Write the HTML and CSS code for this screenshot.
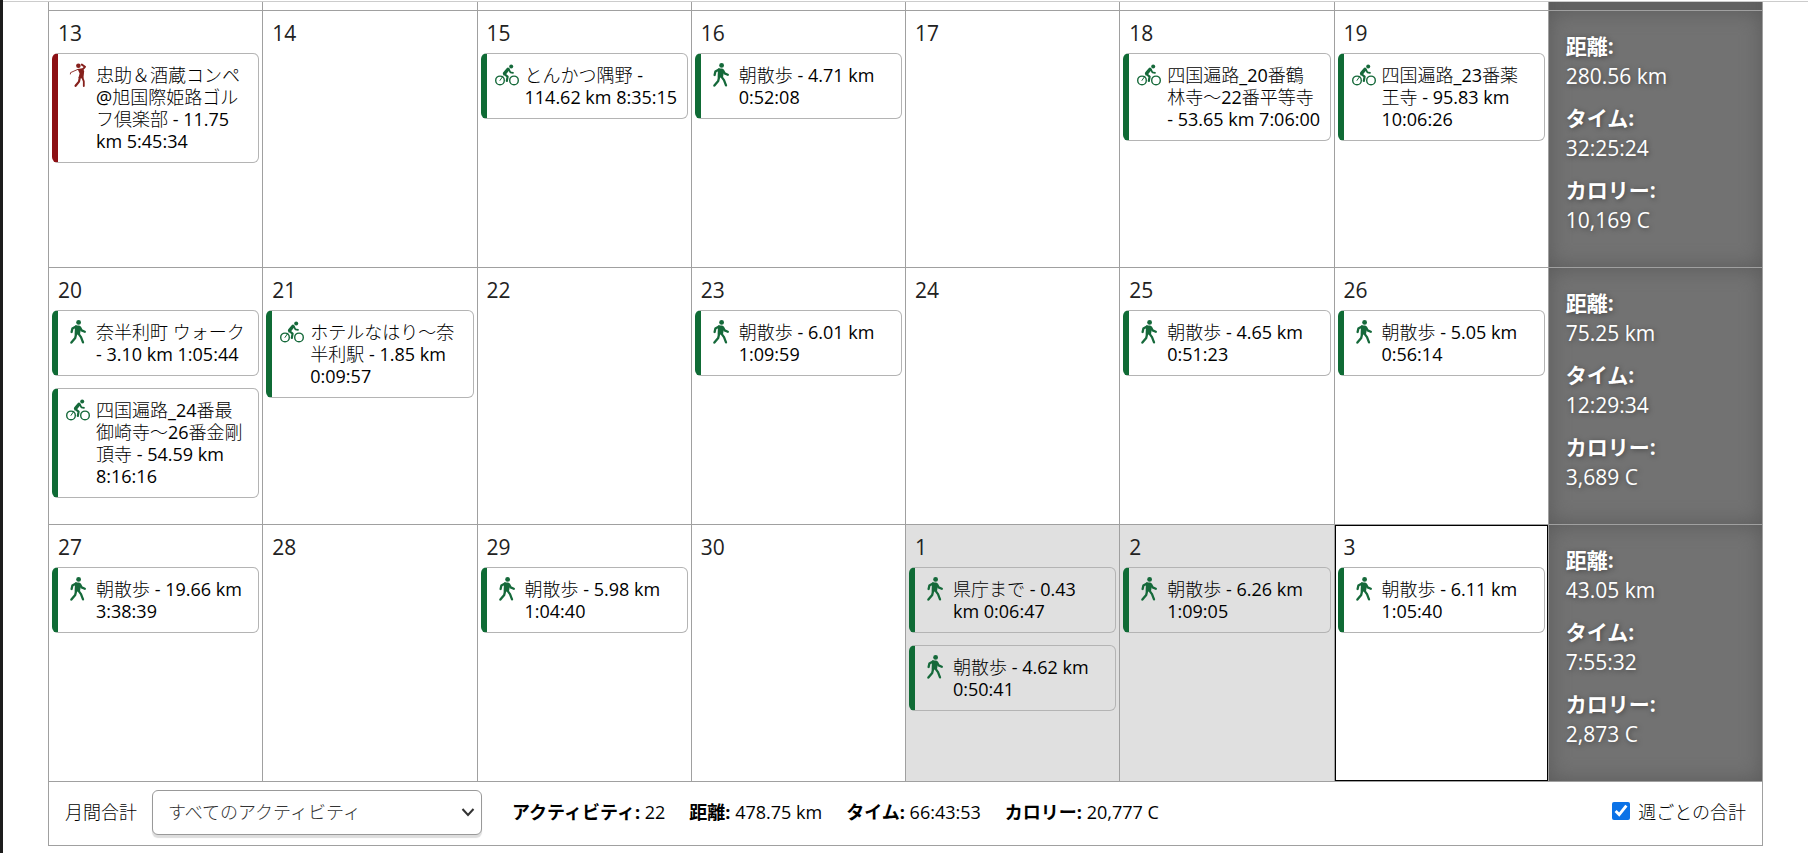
FILE: index.html
```html
<!DOCTYPE html>
<html lang="ja">
<head>
    <meta charset="UTF-8">
    <meta name="viewport" content="width=device-width, initial-scale=1.0">
    <title>カレンダー</title>
    <link rel="stylesheet" href="styles.css">
</head>
<body>
    <svg class="sprite" aria-hidden="true">
        <symbol id="walk" viewBox="0 0 24 24">
            <circle cx="12.6" cy="2.4" r="2.4" fill="currentColor"/>
            <path d="M9 5.4 L13.4 5.4 L15 7.4 L14 14.4 L8.6 14.4 Z" fill="currentColor"/>
            <g fill="none" stroke="currentColor" stroke-width="2.3" stroke-linecap="round" stroke-linejoin="round">
                <path d="M10 6.4 L6.4 8.6 L5.6 12"/>
                <path d="M14 7.4 L15.6 10.4 L18.8 11.8"/>
                <path d="M10.2 13.4 L9.2 18 L5.4 22.6"/>
                <path d="M12.4 13.6 L15 17.2 L17 22.4"/>
            </g>
        </symbol>
        <symbol id="bike" viewBox="0 0 24 24">
            <circle cx="16.2" cy="3.4" r="2" fill="currentColor"/>
            <g fill="none" stroke="currentColor" stroke-linecap="round" stroke-linejoin="round">
                <circle cx="5" cy="17.4" r="4.3" stroke-width="1.4"/>
                <circle cx="19" cy="17.4" r="4.3" stroke-width="1.4"/>
                <path d="M13 6.2 L9.6 10.4" stroke-width="3.4"/>
                <path d="M14 6.6 L15.4 9.4 L18 9.8" stroke-width="1.7"/>
                <path d="M9.4 11.2 L12.6 13.6 L11.8 18" stroke-width="2.2"/>
                <path d="M5 17.4 L8 13" stroke-width="1"/>
            </g>
        </symbol>
        <symbol id="golf" viewBox="0 0 24 24">
            <circle cx="12.4" cy="2.8" r="2.3" fill="currentColor"/>
            <path d="M11.6 6 L16.4 5.2 L18.2 8 L17.4 15.6 L12.4 15 L13.6 10.4 Z" fill="currentColor"/>
            <g fill="none" stroke="currentColor" stroke-linecap="round" stroke-linejoin="round">
                <path d="M16.2 6.8 L19 3.8 L15.8 1.6" stroke-width="1.9"/>
                <path d="M11.8 6.4 L4.6 9.6 L4.4 11" stroke-width="0.9"/>
                <path d="M13.8 14.6 L13 18.6 L9.6 22.8" stroke-width="2.2"/>
                <path d="M16.4 14.6 L17.8 18.4 L17.8 23" stroke-width="1.8"/>
            </g>
        </symbol>
    </svg>

    <main class="page">
        <table class="calendar">
            <tbody>
                <tr class="previous-week">
                    <td></td><td></td><td></td><td></td><td></td><td></td><td></td>
                    <td class="summary"></td>
                </tr>
                <tr class="week">
                    <td>
                        <div class="date">13</div>
                        <a class="activity golf" href="#"><svg class="icon"><use href="#golf"/></svg>忠助＆酒蔵コンペ@旭国際姫路ゴルフ倶楽部 - 11.75 km 5:45:34</a>
                    </td>
                    <td><div class="date">14</div></td>
                    <td>
                        <div class="date">15</div>
                        <a class="activity" href="#"><svg class="icon"><use href="#bike"/></svg>とんかつ隅野 - 114.62 km 8:35:15</a>
                    </td>
                    <td>
                        <div class="date">16</div>
                        <a class="activity" href="#"><svg class="icon"><use href="#walk"/></svg>朝散歩 - 4.71 km 0:52:08</a>
                    </td>
                    <td><div class="date">17</div></td>
                    <td>
                        <div class="date">18</div>
                        <a class="activity" href="#"><svg class="icon"><use href="#bike"/></svg>四国遍路_20番鶴林寺～22番平等寺 - 53.65 km 7:06:00</a>
                    </td>
                    <td>
                        <div class="date">19</div>
                        <a class="activity" href="#"><svg class="icon"><use href="#bike"/></svg>四国遍路_23番薬王寺 - 95.83 km 10:06:26</a>
                    </td>
                    <td class="summary">
                        <dl>
                            <dt>距離:</dt>
                            <dd>280.56 km</dd>
                            <dt>タイム:</dt>
                            <dd>32:25:24</dd>
                            <dt>カロリー:</dt>
                            <dd>10,169 C</dd>
                        </dl>
                    </td>
                </tr>
                <tr class="week">
                    <td>
                        <div class="date">20</div>
                        <a class="activity" href="#"><svg class="icon"><use href="#walk"/></svg>奈半利町 ウォーク - 3.10 km 1:05:44</a>
                        <a class="activity" href="#"><svg class="icon"><use href="#bike"/></svg>四国遍路_24番最御崎寺～26番金剛頂寺 - 54.59 km 8:16:16</a>
                    </td>
                    <td>
                        <div class="date">21</div>
                        <a class="activity" href="#"><svg class="icon"><use href="#bike"/></svg>ホテルなはり～奈半利駅 - 1.85 km 0:09:57</a>
                    </td>
                    <td><div class="date">22</div></td>
                    <td>
                        <div class="date">23</div>
                        <a class="activity" href="#"><svg class="icon"><use href="#walk"/></svg>朝散歩 - 6.01 km 1:09:59</a>
                    </td>
                    <td><div class="date">24</div></td>
                    <td>
                        <div class="date">25</div>
                        <a class="activity" href="#"><svg class="icon"><use href="#walk"/></svg>朝散歩 - 4.65 km 0:51:23</a>
                    </td>
                    <td>
                        <div class="date">26</div>
                        <a class="activity" href="#"><svg class="icon"><use href="#walk"/></svg>朝散歩 - 5.05 km 0:56:14</a>
                    </td>
                    <td class="summary">
                        <dl>
                            <dt>距離:</dt>
                            <dd>75.25 km</dd>
                            <dt>タイム:</dt>
                            <dd>12:29:34</dd>
                            <dt>カロリー:</dt>
                            <dd>3,689 C</dd>
                        </dl>
                    </td>
                </tr>
                <tr class="week">
                    <td>
                        <div class="date">27</div>
                        <a class="activity" href="#"><svg class="icon"><use href="#walk"/></svg>朝散歩 - 19.66 km 3:38:39</a>
                    </td>
                    <td><div class="date">28</div></td>
                    <td>
                        <div class="date">29</div>
                        <a class="activity" href="#"><svg class="icon"><use href="#walk"/></svg>朝散歩 - 5.98 km 1:04:40</a>
                    </td>
                    <td><div class="date">30</div></td>
                    <td class="other-month">
                        <div class="date">1</div>
                        <a class="activity" href="#"><svg class="icon"><use href="#walk"/></svg>県庁まで - 0.43 km 0:06:47</a>
                        <a class="activity" href="#"><svg class="icon"><use href="#walk"/></svg>朝散歩 - 4.62 km 0:50:41</a>
                    </td>
                    <td class="other-month">
                        <div class="date">2</div>
                        <a class="activity" href="#"><svg class="icon"><use href="#walk"/></svg>朝散歩 - 6.26 km 1:09:05</a>
                    </td>
                    <td class="today">
                        <div class="date">3</div>
                        <a class="activity" href="#"><svg class="icon"><use href="#walk"/></svg>朝散歩 - 6.11 km 1:05:40</a>
                    </td>
                    <td class="summary">
                        <dl>
                            <dt>距離:</dt>
                            <dd>43.05 km</dd>
                            <dt>タイム:</dt>
                            <dd>7:55:32</dd>
                            <dt>カロリー:</dt>
                            <dd>2,873 C</dd>
                        </dl>
                    </td>
                </tr>
            </tbody>
        </table>

        <div class="totals">
            <label for="activity-type">月間合計</label>
            <div class="select-box">
                <select id="activity-type">
                    <option>すべてのアクティビティ</option>
                </select>
                <svg class="arrow" viewBox="0 0 14 14" aria-hidden="true"><path d="M1.5 4 L7 10 L12.5 4" fill="none" stroke="currentColor" stroke-width="2"/></svg>
            </div>
            <div class="figures">
                <span><strong>アクティビティ:</strong> 22</span>
                <span><strong>距離:</strong> 478.75 km</span>
                <span><strong>タイム:</strong> 66:43:53</span>
                <span><strong>カロリー:</strong> 20,777 C</span>
            </div>
            <label class="weekly"><input type="checkbox" checked> 週ごとの合計</label>
        </div>
    </main>
</body>
</html>
```
FILE: styles.css
```css
* {
    box-sizing: border-box;
}
body {
    margin: 0;
    padding-top: 1px;
    min-height: 100vh;
    border-left: 3px solid #1c1c1c;
    font-family: "Open Sans", "Noto Sans CJK JP", sans-serif;
    font-size: 18px;
    color: #000;
    background-color: #fff;
}
.sprite {
    display: none;
}
.page {
    border-top: 1px solid #ccc;
    padding: 0 45px;
}

/* calendar */
.calendar {
    width: 100%;
    table-layout: fixed;
    border-collapse: collapse;
}
.calendar td {
    padding: 0 3px;
    border: 1px solid #a0a0a0;
    vertical-align: top;
}
.previous-week {
    height: 8px;
}
.calendar .previous-week td {
    border-top: 0;
}
.week {
    height: 257px;
}
.date {
    padding: 6px 6px 4px;
    font-size: 21px;
    line-height: 32px;
    color: #222;
}
.activity {
    position: relative;
    display: block;
    padding: 10px 9px 10px 38px;
    border: 1px solid #b4b4b4;
    border-left: 6px solid #0f6b35;
    border-radius: 6px;
    font-family: "Open Sans", "Noto Sans CJK JP Light", "Noto Sans CJK JP", sans-serif;
    line-height: 22px;
    color: #000;
    text-decoration: none;
}
.activity + .activity {
    margin-top: 12px;
}
.activity.golf {
    border-left-color: #8c1014;
}
.icon {
    position: absolute;
    top: 9px;
    left: 8px;
    width: 24px;
    height: 24px;
    color: #15693a;
}
.golf .icon {
    color: #86201c;
}
.calendar .other-month {
    background-color: #e0e0e0;
}
.calendar .today {
    box-shadow: inset 0 0 0 1px #000;
}
.calendar .summary {
    padding: 20px 17px;
    border-top-color: #b8b8b8;
    background-color: #727272;
    box-shadow: inset 0 0 20px #5a5a5a;
    color: #fff;
    font-size: 21px;
    line-height: 30px;
    text-shadow: 1px 1px 5px #444;
}
.calendar .previous-week .summary {
    padding: 0;
}
.summary dl,
.summary dd {
    margin: 0;
}
.summary dt {
    font-weight: bold;
}
.summary dd + dt {
    margin-top: 12px;
}

/* monthly totals */
.totals {
    display: flex;
    align-items: center;
    padding: 8px 16px 10px;
    border: 1px solid #a0a0a0;
    border-top: 0;
    font-weight: 300;
}
.totals > label,
.figures {
    padding-bottom: 2px;
}
.select-box {
    position: relative;
    width: 330px;
    margin: 0 30px 0 15px;
}
.select-box select {
    display: block;
    width: 100%;
    height: 45px;
    padding: 0 15px;
    border: 1px solid #999;
    border-radius: 6px;
    box-shadow: 0 3px 1px #ddd;
    background-color: #fff;
    color: #333;
    font: inherit;
    appearance: none;
}
.arrow {
    position: absolute;
    top: 15px;
    right: 7px;
    width: 14px;
    height: 14px;
    color: #333;
    pointer-events: none;
}
.figures {
    display: flex;
    gap: 24px;
    font-weight: normal;
}
.figures strong {
    font-weight: bold;
}
.weekly {
    display: flex;
    align-items: center;
    gap: 8px;
    margin-left: auto;
}
.weekly input {
    width: 18px;
    height: 18px;
    margin: 0;
    accent-color: #0b72e7;
}
```
